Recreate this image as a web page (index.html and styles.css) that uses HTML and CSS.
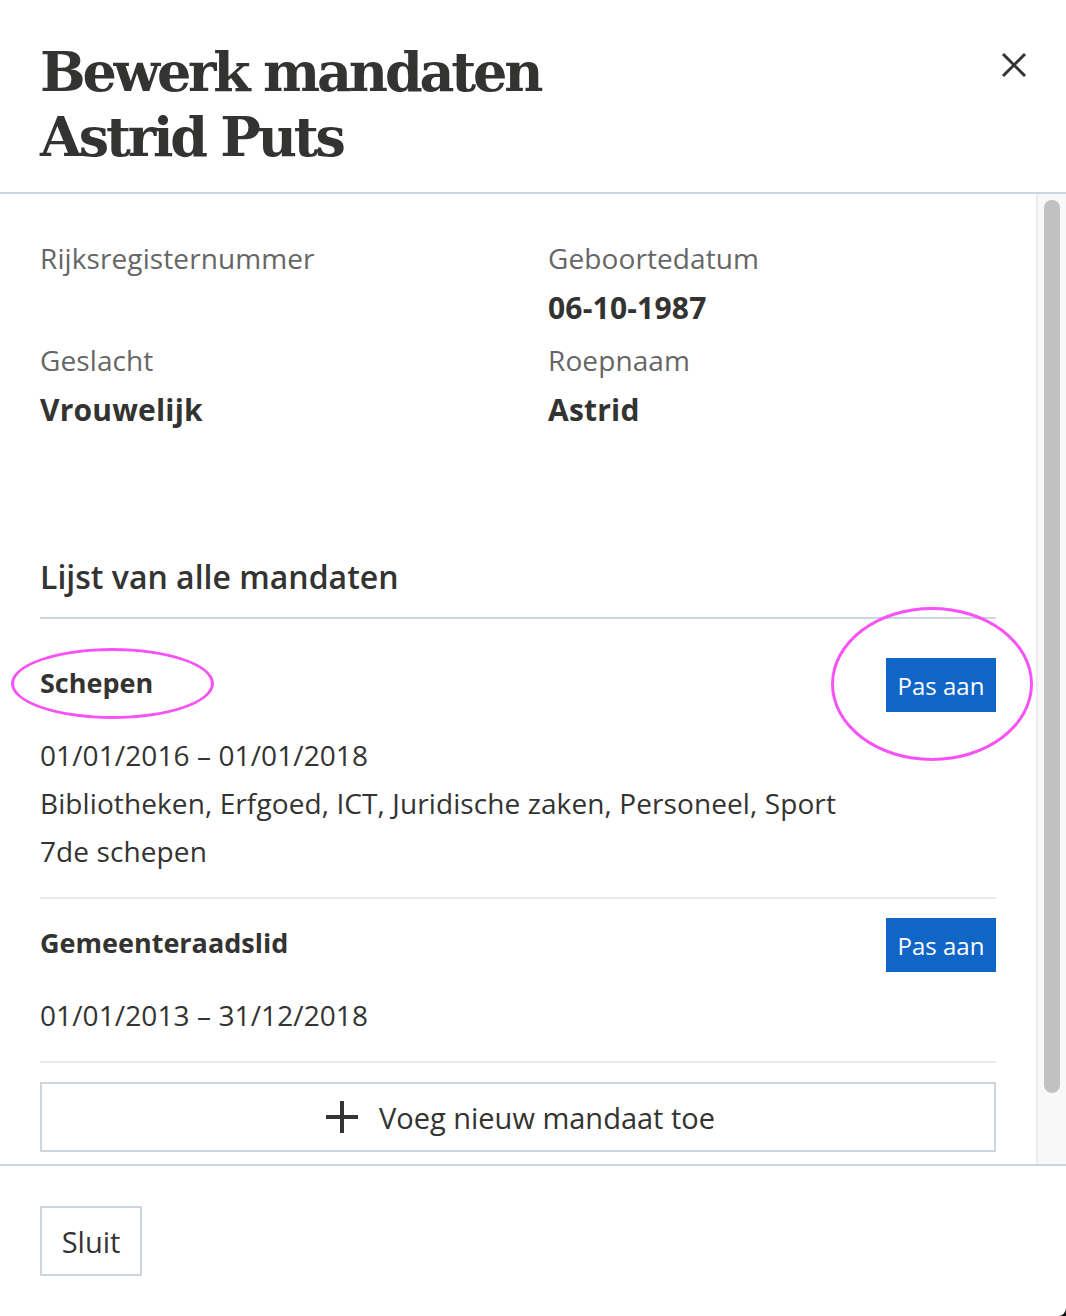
FILE: index.html
```html
<!DOCTYPE html>
<html lang="nl">
<head>
<meta charset="utf-8">
<title>Bewerk mandaten</title>
<link rel="stylesheet" href="styles.css">
</head>
<body>
<div class="modal">
  <header class="modal-header">
    <h1 class="title">Bewerk mandaten<br>Astrid Puts</h1>
    <button class="close" aria-label="Sluit">
      <svg width="26" height="26" viewBox="0 0 26 26"><path d="M2 2 L24 24 M24 2 L2 24" stroke="#333332" stroke-width="3" fill="none"/></svg>
    </button>
  </header>
  <div class="modal-body">
    <div class="content">
      <div class="fields">
        <div class="field"><div class="label">Rijksregisternummer</div><div class="value"></div></div>
        <div class="field"><div class="label">Geboortedatum</div><div class="value">06-10-1987</div></div>
        <div class="field"><div class="label">Geslacht</div><div class="value">Vrouwelijk</div></div>
        <div class="field"><div class="label">Roepnaam</div><div class="value">Astrid</div></div>
      </div>
      <h2 class="list-title">Lijst van alle mandaten</h2>
      <div class="mandate first">
        <div class="mandate-head">
          <span class="mandate-name">Schepen</span>
          <button class="btn-primary">Pas aan</button>
        </div>
        <div class="mandate-line">01/01/2016 – 01/01/2018</div>
        <div class="mandate-line">Bibliotheken, Erfgoed, ICT, Juridische zaken, Personeel, Sport</div>
        <div class="mandate-line">7de schepen</div>
      </div>
      <div class="mandate">
        <div class="mandate-head">
          <span class="mandate-name">Gemeenteraadslid</span>
          <button class="btn-primary">Pas aan</button>
        </div>
        <div class="mandate-line">01/01/2013 – 31/12/2018</div>
      </div>
      <button class="btn-add">
        <svg width="34" height="34" viewBox="0 0 34 34"><path d="M17 1 V33 M1 17 H33" stroke="#333332" stroke-width="4" fill="none"/></svg>
        <span>Voeg nieuw mandaat toe</span>
      </button>
    </div>
    <div class="scrollbar"><div class="thumb"></div></div>
  </div>
  <footer class="modal-footer">
    <button class="btn-secondary">Sluit</button>
  </footer>
  <div class="annot annot-1"></div>
  <div class="annot annot-2"></div>
</div>
</body>
</html>
```
FILE: styles.css
```css
* { box-sizing: border-box; }
html, body { margin: 0; padding: 0; }
body {
  background: #111;
  font-family: "Open Sans", "Noto Sans", sans-serif;
  color: #333332;
  width: 1066px;
  height: 1316px;
  overflow: hidden;
}
.modal {
  position: relative;
  width: 1066px;
  height: 1316px;
  background: #fff;
  border-bottom-right-radius: 8px;
  display: flex;
  flex-direction: column;
}
.modal-header {
  height: 194px;
  flex: none;
  border-bottom: 2px solid #cfd5dd;
  display: flex;
  justify-content: space-between;
  align-items: flex-start;
  padding: 40px 40px 0 40px;
}
.title {
  margin: 0;
  font-family: "DejaVu Serif", serif;
  font-weight: bold;
  font-size: 54px;
  line-height: 65px;
  letter-spacing: -3.2px;
  color: #333332;
}
.close {
  border: 0;
  background: none;
  padding: 0;
  margin: 12px -1px 0 0;
  cursor: pointer;
  display: block;
}
.close svg { display: block; }
.modal-body {
  height: 970px;
  flex: none;
  display: flex;
  overflow: hidden;
}
.content {
  flex: 1;
  padding: 39px 40px 0 40px;
}
.scrollbar {
  width: 30px;
  flex: none;
  background: #f8f8f8;
  border-left: 2px solid #ececec;
  padding: 6px 0 0 6px;
}
.thumb {
  width: 16px;
  height: 893px;
  background: #c1c1c1;
  border-radius: 8px;
}
.fields {
  display: grid;
  grid-template-columns: 508px 1fr;
  row-gap: 2px;
}
.label, .value {
  line-height: 50px;
  height: 50px;
}
.label { color: #666666; font-size: 28px; letter-spacing: 0.1px; }
.value { font-weight: 700; color: #333332; font-size: 30px; letter-spacing: 0.2px; }
.list-title {
  margin: 122px 0 0 0;
  font-size: 32px;
  font-weight: 600;
  line-height: 40px;
  letter-spacing: 0;
  padding-bottom: 20px;
  border-bottom: 2px solid #cfd5dd;
}
.mandate {
  padding: 19px 0 22px 0;
  border-bottom: 2px solid #e6e9ed;
}
.mandate.first { padding-top: 39px; }
.mandate-head {
  display: flex;
  justify-content: space-between;
  align-items: center;
  height: 54px;
  margin-bottom: 19px;
}
.mandate-name {
  font-size: 27px;
  font-weight: 700;
  letter-spacing: 0;
  margin-top: -6px;
}
.btn-primary {
  width: 110px;
  height: 54px;
  border: 0;
  background: #1066c6;
  color: #fff;
  font-family: inherit;
  font-size: 24px;
  letter-spacing: 0;
  padding: 0;
}
.mandate-line {
  font-size: 28px;
  line-height: 48px;
  letter-spacing: 0.1px;
}
.btn-add {
  margin-top: 19px;
  width: 100%;
  height: 70px;
  border: 2px solid #cfd5dd;
  background: #fff;
  display: flex;
  align-items: center;
  justify-content: center;
  gap: 20px;
  font-family: inherit;
  font-size: 29px;
  letter-spacing: 0;
  color: #333332;
  padding: 0 0 0 4px;
}
.btn-add svg { display: block; }
.modal-footer {
  flex: 1;
  border-top: 2px solid #cfd5dd;
  padding: 40px;
}
.btn-secondary {
  width: 102px;
  height: 70px;
  border: 2px solid #cfd5dd;
  background: #fff;
  font-family: inherit;
  font-size: 29px;
  letter-spacing: 0;
  color: #333332;
  padding: 0;
}
.annot {
  position: absolute;
  border: 3px solid #f752f7;
  border-radius: 50%;
  pointer-events: none;
}
.annot-1 { left: 11px; top: 648px; width: 203px; height: 71px; }
.annot-2 { left: 831px; top: 607px; width: 202px; height: 154px; }
```
